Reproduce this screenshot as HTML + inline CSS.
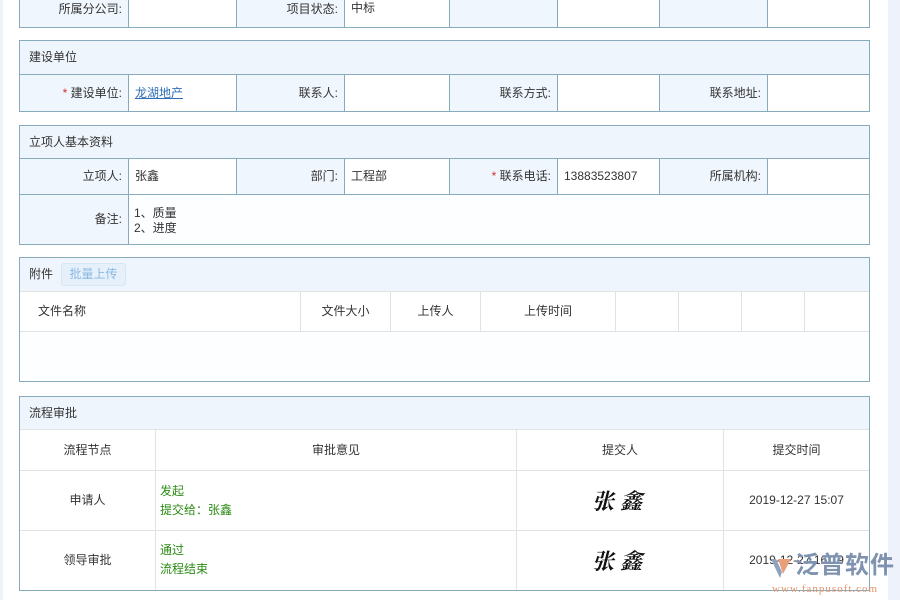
<!DOCTYPE html>
<html><head><meta charset="utf-8"><style>
*{margin:0;padding:0;box-sizing:border-box}
body{width:900px;height:600px;overflow:hidden;background:#fff;position:relative;font-family:"Liberation Sans","Noto Sans CJK SC",sans-serif;font-size:12px;color:#333}
.a{position:absolute}
.box{position:absolute;left:19px;width:851px;border:1px solid #87aabd;background:#fcfeff}
.hd{position:absolute;left:0;right:0;top:0;background:#eff5fd;border-bottom:1px solid #87aabd;padding-left:9px}
.c{position:absolute;top:0;bottom:0;border-right:1px solid #87aabd}
.l{background:#f0f6fd;text-align:right;padding-right:6px}
.v{background:#fff;padding-left:6px}
.g{border-color:#e2e2e2}
.ctr{text-align:center}
.st{color:#d0312d}
.grn{color:#2a8a12}
.sig{font-family:"Noto Serif CJK SC",serif;font-style:italic;font-weight:bold;font-size:22px;color:#111;letter-spacing:6px}
</style></head><body>
<div class="a" style="left:0;top:0;width:3px;height:600px;background:#eef3f8"></div>
<div class="a" style="left:888px;top:0;width:12px;height:600px;background:#eef3fb"></div>

<div class="box" style="top:-10px;height:38px;border-top:none">
 <div class="c l" style="left:0;width:109px;line-height:38px">所属分公司:</div>
 <div class="c v" style="left:109px;width:108px"></div>
 <div class="c l" style="left:217px;width:108px;line-height:38px">项目状态:</div>
 <div class="c v" style="left:325px;width:105px;line-height:36px">中标</div>
 <div class="c l" style="left:430px;width:108px"></div>
 <div class="c v" style="left:538px;width:102px"></div>
 <div class="c l" style="left:640px;width:108px"></div>
 <div class="c v" style="left:748px;width:101px;border-right:none"></div>
</div>

<div class="box" style="top:40px;height:72px">
 <div class="hd" style="height:34px;line-height:33px">建设单位</div>
 <div class="a" style="left:0;right:0;top:34px;bottom:0">
  <div class="c l" style="left:0;width:109px;line-height:37px"><span class="st">*</span> 建设单位:</div>
  <div class="c v" style="left:109px;width:108px;line-height:37px"><span style="color:#2f6fb5;text-decoration:underline">龙湖地产</span></div>
  <div class="c l" style="left:217px;width:108px;line-height:37px">联系人:</div>
  <div class="c v" style="left:325px;width:105px"></div>
  <div class="c l" style="left:430px;width:108px;line-height:37px">联系方式:</div>
  <div class="c v" style="left:538px;width:102px"></div>
  <div class="c l" style="left:640px;width:108px;line-height:37px">联系地址:</div>
  <div class="c v" style="left:748px;width:101px;border-right:none"></div>
 </div>
</div>

<div class="box" style="top:125px;height:120px">
 <div class="hd" style="height:33px;line-height:32px">立项人基本资料</div>
 <div class="a" style="left:0;right:0;top:33px;height:36px;border-bottom:1px solid #87aabd">
  <div class="c l" style="left:0;width:109px;line-height:35px">立项人:</div>
  <div class="c v" style="left:109px;width:108px;line-height:35px">张鑫</div>
  <div class="c l" style="left:217px;width:108px;line-height:35px">部门:</div>
  <div class="c v" style="left:325px;width:105px;line-height:35px">工程部</div>
  <div class="c l" style="left:430px;width:108px;line-height:35px"><span class="st">*</span> 联系电话:</div>
  <div class="c v" style="left:538px;width:102px;line-height:35px">13883523807</div>
  <div class="c l" style="left:640px;width:108px;line-height:35px">所属机构:</div>
  <div class="c v" style="left:748px;width:101px;border-right:none"></div>
 </div>
 <div class="a" style="left:0;right:0;top:69px;bottom:0">
  <div class="c l" style="left:0;width:109px;line-height:49px">备注:</div>
  <div class="a" style="left:114px;top:11px;line-height:15px">1、质量<br>2、进度</div>
 </div>
</div>

<div class="box" style="top:257px;height:125px">
 <div class="hd" style="height:34px;line-height:33px;border-bottom-color:#e2e2e2">附件
  <span class="a" style="left:41px;top:5px;width:65px;height:23px;line-height:21px;border:1px solid #d6e6f4;border-radius:3px;background:#e6f0fb;color:#8ab9e0;text-align:center">批量上传</span></div>
 <div class="a" style="left:0;right:0;top:34px;height:40px;background:#fff;border-bottom:1px solid #e2e2e2;line-height:38px">
  <div class="c g" style="left:0;width:281px;padding-left:18px">文件名称</div>
  <div class="c g ctr" style="left:281px;width:90px">文件大小</div>
  <div class="c g ctr" style="left:371px;width:90px">上传人</div>
  <div class="c g ctr" style="left:461px;width:135px">上传时间</div>
  <div class="c g" style="left:596px;width:63px"></div>
  <div class="c g" style="left:659px;width:63px"></div>
  <div class="c g" style="left:722px;width:63px"></div>
  <div class="c g" style="left:785px;width:64px;border-right:none"></div>
 </div>
</div>

<div class="box" style="top:396px;height:195px;background:#fff">
 <div class="hd" style="height:33px;line-height:32px;border-bottom-color:#e2e2e2">流程审批</div>
 <div class="a" style="left:0;right:0;top:33px;height:41px;border-bottom:1px solid #e2e2e2;line-height:40px">
  <div class="c g ctr" style="left:0;width:136px">流程节点</div>
  <div class="c g ctr" style="left:136px;width:361px">审批意见</div>
  <div class="c g ctr" style="left:497px;width:207px">提交人</div>
  <div class="c g ctr" style="left:704px;width:145px;border-right:none">提交时间</div>
 </div>
 <div class="a" style="left:0;right:0;top:74px;height:60px;border-bottom:1px solid #e2e2e2;line-height:59px">
  <div class="c g ctr" style="left:0;width:136px">申请人</div>
  <div class="c g grn" style="left:136px;width:361px;line-height:19px;padding:11px 0 0 4px">发起<br>提交给：张鑫</div>
  <div class="c g ctr" style="left:497px;width:207px"><span class="sig">张鑫</span></div>
  <div class="c g ctr" style="left:704px;width:145px;border-right:none">2019-12-27 15:07</div>
 </div>
 <div class="a" style="left:0;right:0;top:134px;bottom:0;line-height:59px">
  <div class="c g ctr" style="left:0;width:136px">领导审批</div>
  <div class="c g grn" style="left:136px;width:361px;line-height:19px;padding:10px 0 0 4px">通过<br>流程结束</div>
  <div class="c g ctr" style="left:497px;width:207px"><span class="sig">张鑫</span></div>
  <div class="c g ctr" style="left:704px;width:145px;border-right:none">2019-12-27 16:19</div>
 </div>
</div>

<div class="a" style="left:770px;top:556px;width:24px;height:24px">
 <svg width="24" height="24" viewBox="0 0 24 24"><path d="M1 3 L10 22 L12 16 L6 3Z" fill="#8fa3bf"/><path d="M8 3 L21 3 L13 18Z" fill="#e8a07a"/></svg>
</div>
<div class="a" style="left:795px;top:553px;font-size:24px;line-height:26px;color:#7f93b0;font-weight:bold;letter-spacing:1px">泛普软件</div>
<div class="a" style="left:772px;top:583px;font-size:11px;line-height:12px;color:#e0946e;font-family:'Liberation Serif',serif;letter-spacing:1px">www.fanpusoft.com</div>
</body></html>
